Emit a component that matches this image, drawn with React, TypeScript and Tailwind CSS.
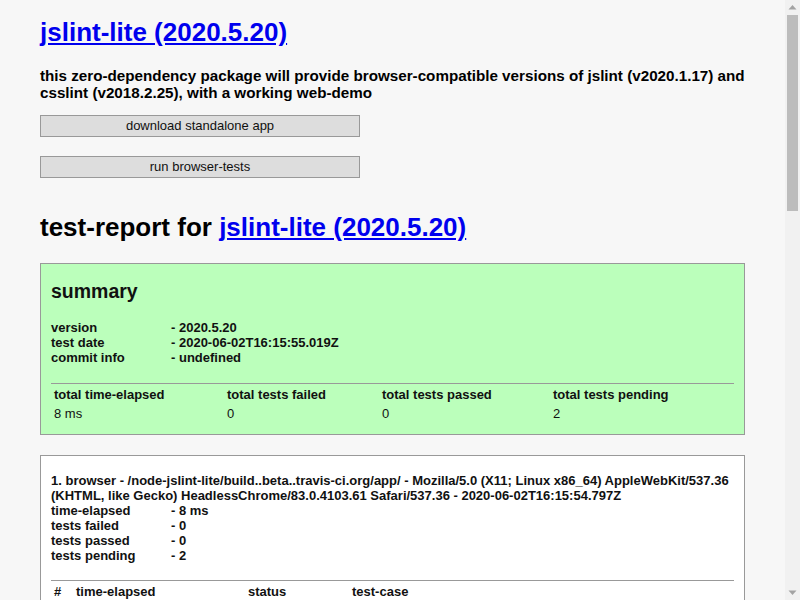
import React from "react";

const summaryRows: [string, string][] = [
  ["version", "- 2020.5.20"],
  ["test date", "- 2020-06-02T16:15:55.019Z"],
  ["commit info", "- undefined"],
];

const browserRows: [string, string][] = [
  ["time-elapsed", "- 8 ms"],
  ["tests failed", "- 0"],
  ["tests passed", "- 0"],
  ["tests pending", "- 2"],
];

const testRows: [string, string, string, string][] = [
  ["1", "0 ms", "pending", "testCase_buildApp_default"],
  ["2", "0 ms", "pending", "testCase_webpage_default"],
];

function Scrollbar() {
  return (
    <div className="fixed right-0 top-0 flex h-screen w-[15px] flex-col items-center bg-[#f1f1f1]">
      <svg width="15" height="15" viewBox="0 0 15 15" className="shrink-0">
        <path d="M3.5 9.5 L7.5 5 L11.5 9.5 Z" fill="#a3a3a3" />
      </svg>
      <div className="h-[196px] w-[11px] shrink-0 bg-[#bcbcbc]" />
      <div className="flex-1" />
      <svg width="15" height="15" viewBox="0 0 15 15" className="shrink-0">
        <path d="M3.5 5.5 L7.5 10 L11.5 5.5 Z" fill="#a3a3a3" />
      </svg>
    </div>
  );
}

export default function App() {
  return (
    <div className="min-h-screen bg-[#f7f7f7]">
      <div className="flow-root w-[785px] px-[40px] pb-[1090px] text-[13px] leading-[normal] text-black font-['Liberation_Sans',Arial,Helvetica,sans-serif]">
        <h1 className="mt-[17.4px] text-[26px] font-bold leading-[normal]">
          <a href="#" className="text-[#0000ee] underline">
            jslint-lite (2020.5.20)
          </a>
        </h1>
        <h3 className="mt-[18.2px] text-[15.21px] font-bold leading-[normal]">
          this zero-dependency package will provide browser-compatible versions of jslint (v2020.1.17) and csslint (v2018.2.25), with a working web-demo
        </h3>
        <div className="mt-[14.4px] flex flex-col items-start">
          <button className="h-[22px] w-[320px] border border-[#999] bg-[#ddd] text-[13px] leading-[15px] text-[#111]">
            download standalone app
          </button>
          <button className="mt-[19px] h-[22px] w-[320px] border border-[#999] bg-[#ddd] text-[13px] leading-[15px] text-[#111]">
            run browser-tests
          </button>
        </div>

        <h1 className="mt-[34.4px] text-[26px] font-bold leading-[normal]">
          test-report for{" "}
          <a href="#" className="text-[#0000ee] underline">
            jslint-lite (2020.5.20)
          </a>
        </h1>

        <div className="mt-[20px] border border-[#999] bg-[#bbffbb] px-[10px] pb-[10px] text-[#111]">
          <h2 className="mt-[15.2px] text-[19.5px] font-bold leading-[normal]">summary</h2>
          <h4 className="mb-[18.3px] mt-[17.3px] font-bold">
            {summaryRows.map(([k, v]) => (
              <div key={k}>
                <span className="inline-block w-[120px]">{k}</span>
                {v}
              </div>
            ))}
          </h4>
          <table className="w-full table-fixed border-separate border-spacing-[2px] border-t border-[#999]">
            <thead>
              <tr>
                <th className="w-[171px] p-px text-left font-bold">total time-elapsed</th>
                <th className="w-[153px] p-px text-left font-bold">total tests failed</th>
                <th className="w-[169px] p-px text-left font-bold">total tests passed</th>
                <th className="w-[180px] p-px text-left font-bold">total tests pending</th>
              </tr>
            </thead>
            <tbody>
              <tr>
                <td className="p-px">8 ms</td>
                <td className="p-px">0</td>
                <td className="p-px">0</td>
                <td className="p-px">2</td>
              </tr>
            </tbody>
          </table>
        </div>

        <div className="mt-[20px] border border-[#999] bg-white px-[10px] pb-[10px] text-[#111]">
          <h4 className="mb-[16.5px] mt-[17.3px] font-bold">
            <div>
              1. browser - /node-jslint-lite/build..beta..travis-ci.org/app/ - Mozilla/5.0 (X11; Linux x86_64) AppleWebKit/537.36 (KHTML, like Gecko) HeadlessChrome/83.0.4103.61 Safari/537.36 - 2020-06-02T16:15:54.797Z
            </div>
            {browserRows.map(([k, v]) => (
              <div key={k}>
                <span className="inline-block w-[120px]">{k}</span>
                {v}
              </div>
            ))}
          </h4>
          <table className="w-full table-fixed border-separate border-spacing-[2px] border-t border-[#999]">
            <thead>
              <tr>
                <th className="w-[20px] p-px text-left font-bold">#</th>
                <th className="w-[170px] p-px text-left font-bold">time-elapsed</th>
                <th className="w-[102px] p-px text-left font-bold">status</th>
                <th className="w-[381px] p-px text-left font-bold">test-case</th>
              </tr>
            </thead>
            <tbody>
              {testRows.map((r) => (
                <tr key={r[0]}>
                  {r.map((c, i) => (
                    <td key={i} className="p-px">
                      {c}
                    </td>
                  ))}
                </tr>
              ))}
            </tbody>
          </table>
        </div>
      </div>
      <Scrollbar />
    </div>
  );
}
